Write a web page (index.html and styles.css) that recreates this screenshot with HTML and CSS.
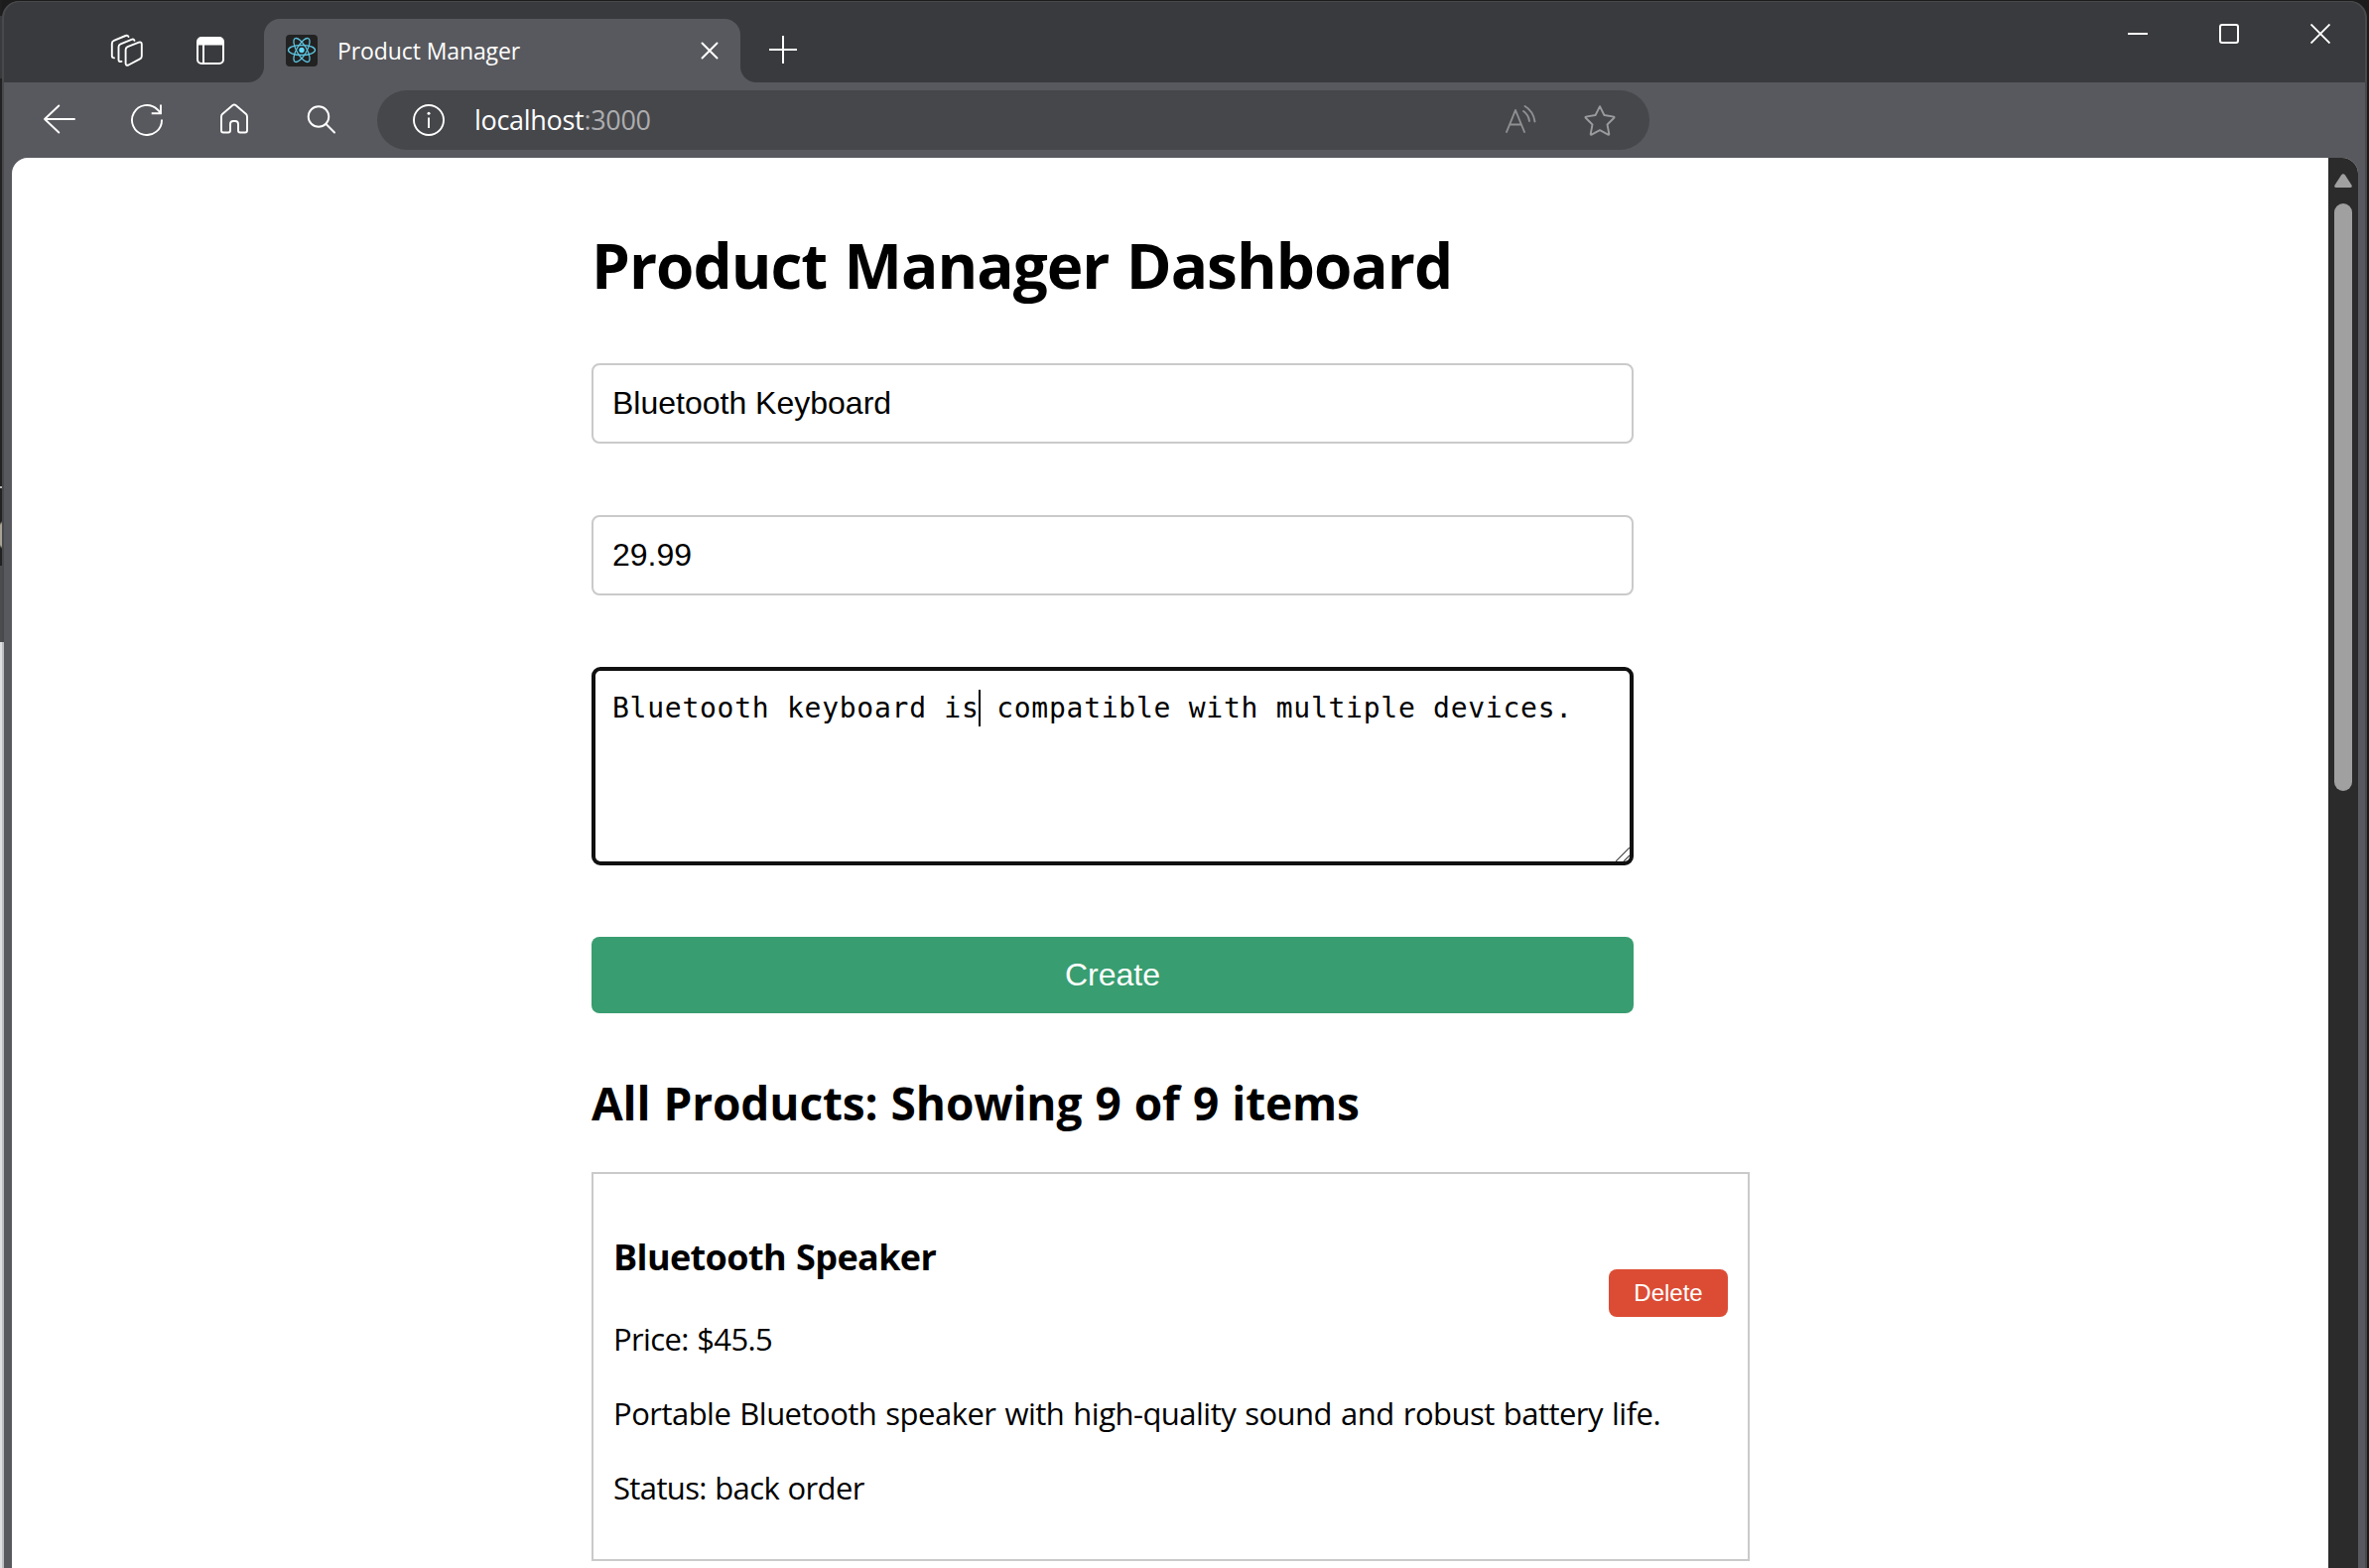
FILE: index.html
```html
<!DOCTYPE html>
<html lang="en">
<head>
<meta charset="utf-8">
<title>Product Manager</title>
<link rel="stylesheet" href="styles.css">
</head>
<body>
<div class="desktop">
  <div class="window">
    <header class="tabstrip">
      <svg class="workspaces" viewBox="0 0 34 34" width="34" height="34"><g fill="none" stroke="#fff" stroke-width="1.9" stroke-linejoin="round" stroke-linecap="round"><path d="M17.500 13.200 29 8.700q2.800-.8 2.800 1.800v12q0 2-1.800 2.800L18.500 31.500q-2.900 1-2.900-1.700V16.300q0-2.200 1.900-3.100z"/><path d="M24.500 6.900q-.6-2-3-1.100L10.500 10.300q-2 .8-2 3v12.900q0 2.400 3 1.700"/><path d="M18.500 3.100q-.6-2-3-1.100L3.800 6.900q-2 .8-2 3v12.300q0 2 2.200 2.200"/></g></svg>
      <svg class="tabpanel" viewBox="0 0 28 28" width="28" height="28"><rect x="1" y="1" width="26" height="26" rx="4" fill="none" stroke="#fff" stroke-width="2"/><path d="M1 8.500V5q0-4 4-4h18q4 0 4 4v3.500z" fill="#fff"/><path d="M7 8v19" stroke="#fff" stroke-width="2"/></svg>
      <div class="tab">
        <svg viewBox="0 0 32 32" width="32" height="32"><rect width="32" height="32" rx="4" fill="#222"/><circle cx="16" cy="15.500" r="2.700" fill="#61dafb"/><g fill="none" stroke="#5cc4e0" stroke-width="1.300"><ellipse cx="16" cy="15.500" rx="13.500" ry="5"/><ellipse cx="16" cy="15.500" rx="13.500" ry="5" transform="rotate(60 16 15.500)"/><ellipse cx="16" cy="15.500" rx="13.500" ry="5" transform="rotate(120 16 15.500)"/></g></svg>
        <span class="tab-title">Product Manager</span>
        <svg viewBox="0 0 18 18" width="18" height="18"><path d="M1.500 1.500l15 15M16.500 1.500l-15 15" stroke="#fff" stroke-width="2" stroke-linecap="round"/></svg>
      </div>
      <svg class="newtab" viewBox="0 0 28 28" width="28" height="28"><path d="M14 0v28M0 14h28" stroke="#fff" stroke-width="2"/></svg>
      <div class="controls">
        <svg viewBox="0 0 20 20" width="20" height="20"><path d="M0 10h20" stroke="#fff" stroke-width="2"/></svg>
        <svg viewBox="0 0 20 20" width="20" height="20"><rect x="1" y="1" width="18" height="18" rx="2" fill="none" stroke="#fff" stroke-width="2"/></svg>
        <svg viewBox="0 0 20 20" width="20" height="20"><path d="M.5.5l19 19M19.500.5l-19 19" stroke="#fff" stroke-width="1.900"/></svg>
      </div>
    </header>
    <nav class="toolbar">
      <svg class="nav-ic back" viewBox="0 0 34 34" width="34" height="34"><path d="M32 17H2M16.300 3.500 2 17l14.300 13.500" fill="none" stroke="#fff" stroke-width="1.900" stroke-linecap="round" stroke-linejoin="round"/></svg>
      <svg class="nav-ic reload" viewBox="0 0 34 34" width="34" height="34"><path d="M32 17.500A15 15 0 1 1 27.500 7.300L31 10.800M31 2.500v8.800h-9.300" fill="none" stroke="#fff" stroke-width="1.900"/></svg>
      <svg class="nav-ic home" viewBox="0 0 34 34" width="34" height="34"><path d="M4 14.500q0-1.500 1-2.500L15.500 3Q17 1.800 18.500 3L29 12q1 1 1 2.500V28.500q0 2-2 2H23q-2 0-2-2V22q0-3-3-3h-2q-3 0-3 3v6.500q0 2-2 2H6q-2 0-2-2z" fill="none" stroke="#fff" stroke-width="1.900" stroke-linejoin="round"/></svg>
      <svg class="nav-ic search" viewBox="0 0 34 34" width="34" height="34"><circle cx="14" cy="14.500" r="10.300" fill="none" stroke="#fff" stroke-width="1.900"/><path d="M21.500 22 30 30.500" stroke="#fff" stroke-width="2" stroke-linecap="round"/></svg>
      <div class="address">
        <svg viewBox="0 0 34 34" width="34" height="34"><circle cx="17" cy="17" r="15" fill="none" stroke="#fff" stroke-width="1.900"/><path d="M17 14.500v10.500" stroke="#fff" stroke-width="1.900"/><circle cx="17" cy="10.300" r="1.500" fill="#fff"/></svg>
        <span class="url">localhost<span class="port">:3000</span></span>
        <svg class="readaloud" viewBox="0 0 32 32" width="32" height="32"><g fill="none" stroke="#8f9092" stroke-width="1.900" stroke-linecap="round" stroke-linejoin="round"><path d="M2 28 11 6l9 22M5.500 20.500h11.500"/><path d="M19 7q5 3.500 6 10M20.500 2q8.500 5 10 15.500"/></g></svg>
        <svg viewBox="0 0 34 34" width="34" height="34"><path d="M17 3.200 21.400 12 31 13.600q1 .3.300 1.200l-6.800 6.700 1.800 9.500q0 1-1 .6L17 27.200 8.700 31.600q-1 .4-1-.6l1.800-9.500-6.800-6.700q-.7-.9.3-1.200L12.600 12z" fill="none" stroke="#9a9b9d" stroke-width="1.900" stroke-linejoin="round"/></svg>
      </div>
    </nav>
    <div class="viewport">
      <main class="page">
        <h1>Product Manager Dashboard</h1>
        <form class="form">
          <div class="field">Bluetooth Keyboard</div>
          <div class="field">29.99</div>
          <div class="area">Bluetooth keyboard is<i class="caret"></i> compatible with multiple devices.
            <svg class="grip" viewBox="0 0 14 14" width="14" height="14"><path d="M0 14 14 0M8 14l6-6" stroke="#444" stroke-width="1.200"/></svg></div>
          <div class="create">Create</div>
        </form>
        <h2>All Products: Showing 9 of 9 items</h2>
        <section class="card">
          <div class="info">
            <h3>Bluetooth Speaker</h3>
            <p>Price: $45.5</p>
            <p class="description">Portable Bluetooth speaker with high-quality sound and robust battery life.</p>
            <p>Status: back order</p>
          </div>
          <div class="delete">Delete</div>
        </section>
      </main>
      <div class="scrollbar">
        <svg viewBox="0 0 18 14" width="18" height="14"><path d="M7 1.500Q9-1 11 1.500L17.500 11.500Q18.500 14 16 14H2Q-.5 14 .5 11.500z" fill="#a0a0a0"/></svg>
        <div class="thumb"></div>
      </div>
    </div>
  </div>
  <div class="backdrop"><i class="bd-corner"></i><i class="bd-strip"></i><i class="bd-dark"></i><i class="bd-grey"></i><i class="bd-light"></i></div>
</div>
</body>
</html>
```
FILE: styles.css
```css
* { box-sizing: border-box; margin: 0; }
body { background: #1c1c1d; overflow: hidden; font-family: "Open Sans", "Noto Sans", sans-serif; color: #000; }
svg { display: block; flex: none; }
.desktop { position: relative; display: flex; width: 2387px; height: 1580px; padding: 1px 2px 0; }

/* Sliver of the desktop that shows along the window's left edge */
.backdrop { position: absolute; left: 0; top: 0; bottom: 0; width: 4px; display: flex; flex-direction: column; }
.backdrop i { width: 2px; }
.bd-corner { height: 16px; background: #1f1f20; }
.bd-strip { height: 63px; background: #393a3d; }
.bd-dark { height: 491px; background: radial-gradient(ellipse 4px 14px at 2px 460px, #a8a394 80%, transparent) , linear-gradient(#222224 411px, #b5b5b5 411px 413px, #222224 413px); }
.bd-grey { height: 77px; background: #4b4c50; }
.backdrop .bd-light { flex: 1; width: 4px; background: linear-gradient(90deg, #dfe0e2 50%, #bdbec2 50%); }

.window { flex: 1; display: flex; flex-direction: column; background: #58595e; border: 2px solid #48494b; border-width: 1px 2px 0; border-radius: 17px 17px 0 0; overflow: hidden; }

.tabstrip { height: 81px; display: flex; align-items: flex-start; background: #393a3d; }
.workspaces { margin: 32px 0 0 107px; }
.tabpanel { margin: 35px 0 0 53px; }
.tab { position: relative; width: 480px; height: 64px; margin: 17px 0 0 40px; padding: 0 22px; display: flex; align-items: center; background: #58595e; border-radius: 16px 16px 0 0; }
.tab::before, .tab::after { content: ""; position: absolute; bottom: 0; width: 16px; height: 16px; }
.tab::before { left: -16px; background: radial-gradient(circle at 0 0, #393a3d 15.500px, #58595e 16.500px); }
.tab::after { right: -16px; background: radial-gradient(circle at 100% 0, #393a3d 15.500px, #58595e 16.500px); }
.tab-title { flex: 1; margin: 0 0 1px 20px; color: #fff; font-size: 23px; line-height: 32px; letter-spacing: -0.1px; }
.newtab { margin: 34px 0 0 29px; }
.controls { display: flex; gap: 72px; margin: 22px 35px 0 auto; }

.toolbar { height: 76px; display: flex; align-items: flex-start; padding-top: 8px; }
.nav-ic { margin: 12px 0 0; }
.back { margin-left: 39px; }
.reload, .home, .search { margin-left: 54px; }
.address { display: flex; align-items: center; width: 1282px; height: 60px; margin-left: 39px; padding: 0 33px 0 35px; border-radius: 30px; background: #46474b; }
.url { flex: 1; margin-left: 29px; color: #fff; font-size: 27px; line-height: 36px; letter-spacing: -0.3px; }
.port { color: #adadaf; }
.readaloud { margin-right: 47px; }

.viewport { flex: 1; display: flex; margin: 0 7px 0 8px; border-radius: 16px 16px 0 0; overflow: hidden; background: #fff; }
.page { flex: 1; padding: 68px 0 0 584px; }
h1 { font-size: 62px; line-height: 80px; font-weight: 700; letter-spacing: -1px; word-spacing: 2.2px; }
.form { display: flex; flex-direction: column; gap: 72px; width: 1050px; margin-top: 59px; }
.field { height: 81px; padding: 0 19px; border: 2px solid #cacaca; border-radius: 8px; font: 32px/77px "Liberation Sans", Arial, sans-serif; }
.area { position: relative; height: 200px; padding: 18px 17px; border: 4px solid #101010; border-radius: 9px; font: 28px/40px "DejaVu Sans Mono", monospace; letter-spacing: 0.74px; white-space: nowrap; }
.caret { display: inline-block; width: 2px; height: 37px; margin: -4px -1px -4px -1px; vertical-align: -8px; background: #000; transform: translateY(-3px); }
.grip { position: absolute; right: 0; bottom: 0; }
.create { height: 77px; border-radius: 8px; background: #389d70; color: #fff; text-align: center; font: 32px/76px "Liberation Sans", Arial, sans-serif; }
h2 { margin-top: 60px; font-size: 46px; line-height: 60px; font-weight: 700; letter-spacing: -0.15px; word-spacing: 1.4px; }
.card { display: flex; justify-content: space-between; align-items: flex-start; width: 1167px; height: 392px; margin-top: 40px; padding: 59px 20px 0 20px; border: 2px solid #cacaca; }
.info { width: 1000px; }
h3 { font-size: 36px; line-height: 50px; font-weight: 700; margin-bottom: 35px; letter-spacing: -0.63px; word-spacing: 1.4px; }
.info p { font-size: 31px; line-height: 44px; margin-bottom: 31px; white-space: nowrap; letter-spacing: -0.63px; word-spacing: 1px; }
.info .description { letter-spacing: -0.52px; word-spacing: 1.5px; }
.delete { width: 120px; height: 48px; margin-top: 37px; border-radius: 8px; background: #dc4c34; color: #fff; text-align: center; font: 24px/47px "Liberation Sans", Arial, sans-serif; }

.scrollbar { width: 30px; padding: 16px 6px; background: #2b2b2b; }
.thumb { height: 592px; margin-top: 16px; border-radius: 9px; background: #a0a0a0; }
```
